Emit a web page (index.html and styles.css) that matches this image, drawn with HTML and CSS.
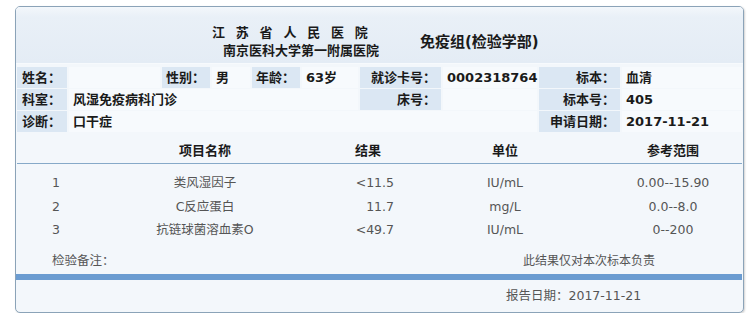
FILE: index.html
```html
<!DOCTYPE html>
<html lang="zh-CN">
<head>
<meta charset="utf-8">
<title>检验报告</title>
<link rel="stylesheet" href="styles.css">
</head>
<body>
<div class="card">
  <div class="header">
    <div class="title">
      <div class="t1">江苏省人民医院</div>
      <div class="t2">南京医科大学第一附属医院</div>
    </div>
    <div class="dept">免疫组(检验学部)</div>
  </div>

  <div class="info">
    <div class="lb lb-left">姓名：</div>
    <div class="val"></div>
    <div class="lb">性别：</div>
    <div class="val">男</div>
    <div class="lb">年龄：</div>
    <div class="val">63岁</div>
    <div class="lb">就诊卡号：</div>
    <div class="val">0002318764</div>
    <div class="lb">标本：</div>
    <div class="val">血清</div>

    <div class="lb lb-left">科室：</div>
    <div class="val span5">风湿免疫病科门诊</div>
    <div class="lb">床号：</div>
    <div class="val"></div>
    <div class="lb">标本号：</div>
    <div class="val">405</div>

    <div class="lb lb-left">诊断：</div>
    <div class="val span7">口干症</div>
    <div class="lb">申请日期：</div>
    <div class="val">2017-11-21</div>
  </div>

  <div class="results">
    <div class="thead">
      <div></div>
      <div class="c">项目名称</div>
      <div class="c">结果</div>
      <div class="c">单位</div>
      <div class="c rng">参考范围</div>
    </div>
    <div class="tbody">
      <div class="row">
        <div class="idx">1</div>
        <div class="c">类风湿因子</div>
        <div class="res">&lt;11.5</div>
        <div class="c">IU/mL</div>
        <div class="c rng">0.00--15.90</div>
      </div>
      <div class="row">
        <div class="idx">2</div>
        <div class="c">C反应蛋白</div>
        <div class="res">11.7</div>
        <div class="c">mg/L</div>
        <div class="c rng">0.0--8.0</div>
      </div>
      <div class="row">
        <div class="idx">3</div>
        <div class="c">抗链球菌溶血素O</div>
        <div class="res">&lt;49.7</div>
        <div class="c">IU/mL</div>
        <div class="c rng">0--200</div>
      </div>
    </div>
    <div class="remark">
      <div class="idx">检验备注：</div>
      <div class="note">此结果仅对本次标本负责</div>
    </div>
  </div>

  <div class="bar"></div>
  <div class="footer">报告日期：2017-11-21</div>
</div>
</body>
</html>
```

FILE: styles.css
```css
html, body {
  margin: 0;
  padding: 0;
  background: #ffffff;
}

body {
  padding: 6px 0 0 15px;
  font-family: "DejaVu Sans", "Noto Sans CJK SC", sans-serif;
  color: #1a1a1a;
}

.card {
  width: 727px;
  height: 305px;
  border: 1px solid #8ba3b8;
  border-radius: 5px;
  background: #f3f7fb;
  box-shadow: 1px 1px 2px rgba(0, 0, 0, 0.18);
  display: flex;
  flex-direction: column;
  overflow: hidden;
}

/* header */
.header {
  height: 57px;
  box-sizing: border-box;
  padding: 14px 0 0 196px;
  display: flex;
  align-items: center;
  align-self: stretch;
  background: linear-gradient(to bottom, #f3f7fb 0px, #e9f0f7 10px, #e4ecf5 100%);
  border-bottom: 1px solid #f7fafd;
}

.header .title {
  font-weight: bold;
  font-size: 13px;
  line-height: 18px;
  margin-top: -14px;
  padding-top: 14px;
}

.t1 {
  letter-spacing: 10.8px;
}

.t2 {
  padding-left: 11px;
}

.dept {
  margin-left: 41px;
  font-size: 15px;
  font-weight: bold;
  line-height: 18px;
  margin-top: -14px;
  padding-top: 14px;
}

/* info grid */
.info {
  margin: 3px 1px 0 1px;
  display: grid;
  grid-template-columns: 50px 91px 48px 38px 48px 56px 81px 94px 81px 1fr;
  grid-auto-rows: 21px;
  gap: 1px 2px;
  font-size: 13px;
  font-weight: bold;
}

.lb {
  background: #dbe7f3;
  text-align: right;
  padding-right: 5px;
  line-height: 21px;
  white-space: nowrap;
}

.lb-left {
  text-align: left;
  padding-right: 0;
  padding-left: 5px;
}

.val {
  background: #f7fafd;
  padding-left: 4px;
  line-height: 21px;
  white-space: nowrap;
}

.span5 {
  grid-column: span 5;
}

.span7 {
  grid-column: span 7;
}

/* results */
.results {
  margin: 7px 1px 0 1px;
  font-size: 12.5px;
}

.thead,
.row,
.remark {
  display: grid;
  grid-template-columns: 93px 190px 136px 138px 1fr;
}

.thead {
  height: 24px;
  line-height: 24px;
  font-weight: bold;
  font-size: 13px;
  color: #1a1a1a;
  border-bottom: 1px solid #86a9c8;
}

.tbody {
  padding-top: 7px;
  color: #555555;
}

.row {
  height: 23.5px;
  line-height: 23.5px;
}

.c {
  text-align: center;
  white-space: nowrap;
}

.rng {
  padding-left: 30px;
}

.idx {
  padding-left: 35px;
  white-space: nowrap;
}

.res {
  text-align: right;
  padding-right: 42px;
}

.remark {
  margin-top: 7px;
  height: 24px;
  line-height: 24px;
  color: #555555;
}

.remark .idx {
  grid-column: span 3;
}

.note {
  grid-column: span 2;
  text-align: center;
  font-size: 12px;
}

.bar {
  margin: 1px 1px 0 0;
  height: 6px;
  background: #6b9cd1;
}

.footer {
  height: 31px;
  line-height: 31px;
  padding-left: 490px;
  font-size: 12.5px;
  color: #555555;
}
```
